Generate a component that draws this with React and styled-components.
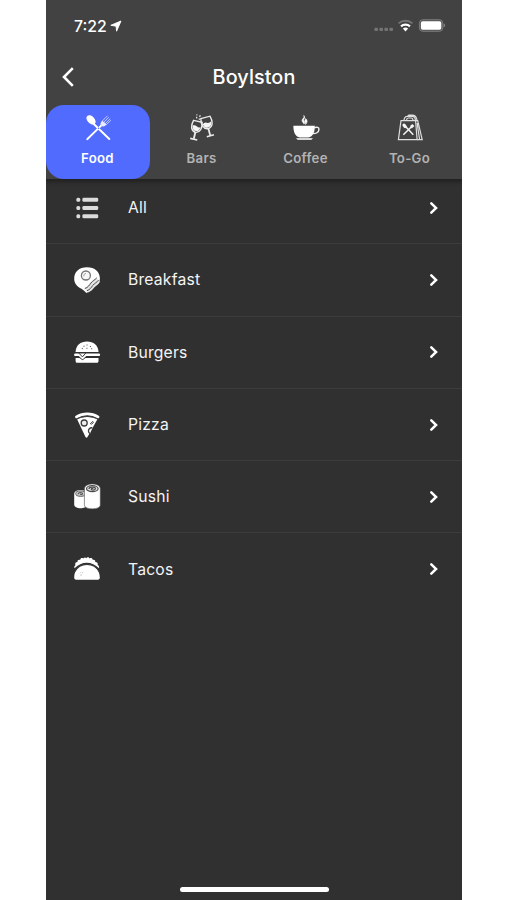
import React, { useState } from "react";
import styled, { createGlobalStyle } from "styled-components";

const tabs = [
  { name: "Food", icon: <FoodIcon /> },
  { name: "Bars", icon: <BarsIcon /> },
  { name: "Coffee", icon: <CoffeeIcon /> },
  { name: "To-Go", icon: <ToGoIcon /> },
];

const categories = [
  { name: "All", icon: <AllIcon /> },
  { name: "Breakfast", icon: <BreakfastIcon /> },
  { name: "Burgers", icon: <BurgerIcon /> },
  { name: "Pizza", icon: <PizzaIcon /> },
  { name: "Sushi", icon: <SushiIcon /> },
  { name: "Tacos", icon: <TacoIcon /> },
];

function App() {
  const [current, setCurrent] = useState("Food");

  return (
    <Page>
      <GlobalStyle />
      <Phone>
        <Header>
          <StatusBar>
            <Time>
              7:22
              <LocationIcon />
            </Time>
            <StatusIcons />
          </StatusBar>
          <NavBar>
            <BackButton aria-label="Back">
              <svg width="14" height="22" viewBox="0 0 14 22" fill="none">
                <path d="M11.8 2.1 3 11l8.8 8.900" stroke="#fff" strokeWidth="2.6" />
              </svg>
            </BackButton>
            <Title>Boylston</Title>
          </NavBar>
          <TabBar>
            {tabs.map((tab) => (
              <Tab
                key={tab.name}
                $active={tab.name === current}
                onClick={() => setCurrent(tab.name)}
              >
                {tab.icon}
                <TabLabel>{tab.name}</TabLabel>
              </Tab>
            ))}
          </TabBar>
        </Header>
        <List>
          {categories.map((category) => (
            <Row key={category.name}>
              <RowIcon>{category.icon}</RowIcon>
              <RowLabel>{category.name}</RowLabel>
              <Chevron />
            </Row>
          ))}
        </List>
        <HomeIndicator />
      </Phone>
    </Page>
  );
}

export default App;

function LocationIcon() {
  return (
    <svg width="12" height="12" viewBox="0 0 12 12">
      <path d="M11 1 .8 5.300l5.300.9.500 5z" fill="#fff" stroke="#fff" strokeWidth=".9" strokeLinejoin="round" />
    </svg>
  );
}

function StatusIcons() {
  return (
    <svg width="72" height="16" viewBox="0 0 72 16">
      <g fill="#747474">
        <rect x=".4" y="10.800" width="3.600" height="3.200" rx="1" />
        <rect x="5.400" y="10.800" width="3.600" height="3.200" rx="1" />
        <rect x="10.400" y="10.800" width="3.600" height="3.200" rx="1" />
        <rect x="15.400" y="10.800" width="3.600" height="3.200" rx="1" />
      </g>
      <path d="M24.600 6.400a10 10 0 0 1 13.800 0" stroke="#747474" strokeWidth="2" fill="none" />
      <path d="M27 9.400a6.600 6.600 0 0 1 9 0" stroke="#fff" strokeWidth="2.200" fill="none" />
      <path d="M28.900 11.600a3.800 3.800 0 0 1 5.200 0l-2.600 2.900z" fill="#fff" />
      <rect x="45.400" y="2.700" width="23.400" height="11.600" rx="3.400" fill="#565656" stroke="#7b7b7b" />
      <rect x="46.900" y="4.200" width="20.400" height="8.600" rx="1.800" fill="#fff" />
      <path d="M69.700 6.600c1.900.5 1.900 3.300 0 3.800z" fill="#858585" />
    </svg>
  );
}

function FoodIcon() {
  return (
    <svg width="28" height="28" viewBox="0 0 28 28">
      <path d="M9.500 9.800 25.300 25" stroke="#fff" strokeWidth="2" strokeLinecap="round" />
      <path d="M3.200 25.200 18.400 10.400" stroke="#fff" strokeWidth="1.900" strokeLinecap="round" />
      <ellipse cx="7" cy="5.900" rx="3.600" ry="5.500" transform="rotate(-43 7 5.900)" fill="#fff" />
      <path d="M16.700 11.700c-.6-2.500.1-3.500 1.600-5l2.200 1.900 2 2c-1.800 1.900-3.200 2.500-5.800 1.100z" fill="#e8ebff" />
      <path
        d="M18.400 6.900 23.300 2M19.900 8.200l4.600-4.700M21.300 9.600l4.600-4.500M22.400 10.500l4.200-3.900"
        stroke="#cdd5ff"
        strokeWidth=".9"
        strokeLinecap="round"
      />
      <circle cx="14.600" cy="14.200" r=".8" fill="#5069fb" />
    </svg>
  );
}

function BarsIcon() {
  return (
    <svg width="28" height="28" viewBox="0 0 28 28" fill="none" stroke="#ececec" strokeWidth="1.400">
      <g transform="translate(8.400 13.600) rotate(13)">
        <path d="M-4.400-6.400H4.400C6-1 4.900 4.400 0 4.800-4.900 4.400-6-1-4.400-6.400z" />
        <path d="M-4-1.400Q-1.800-2.600 0-1.400T4-1.200C3.600 2.400 2.400 3.500 0 3.600-2.400 3.500-3.600 2.400-4-1.400z" fill="#f4f4f4" stroke="none" />
        <path d="M0 4.500v7" strokeWidth="1.800" />
        <path d="M-3.600 11.900h7.200" strokeWidth="1.600" />
      </g>
      <g transform="translate(19 9.400) rotate(-15)">
        <path d="M-4.700-6.200H4.700C6.300-1 5.200 5 0 5.400-5.200 5-6.300-1-4.700-6.200z" />
        <path d="M-4.300-.4Q-2-2 0-.7T4.300-.8C3.900 3.100 2.500 4.200 0 4.300-2.500 4.200-3.900 3.100-4.300-.4z" fill="#f4f4f4" stroke="none" />
        <path d="M0 5v7.400" strokeWidth="1.800" />
        <path d="M-3.600 12.800h7.400" strokeWidth="1.600" />
      </g>
      <path d="M8.700 2.800v1.600M12.300 1.300l-.7 1.700M11 4.500l.6 1.300M8.400.9h1" strokeWidth="1.200" />
    </svg>
  );
}

function CoffeeIcon() {
  return (
    <svg width="28" height="28" viewBox="0 0 28 28">
      <path d="M1.400 11.800h21.400c.2 6.200-1.900 11-6.400 11.800H7.800C3.300 22.800 1.200 18 1.400 11.800z" fill="#fff" />
      <path d="M22 13.700c3.200-1.200 5.100-.4 4.900 1.900-.2 2.700-3 4.200-6.200 4" fill="none" stroke="#eee" strokeWidth="1.500" />
      <path d="M4 24h17l-1.700 2H5.700z" fill="#d6d6d6" />
      <path
        d="M11.800 1.500c1.600 1.800-1.900 3.300-1.700 5.200.1 1.500 1.700 1.800 1.900 3.400 1.100-1.400.3-2.500-.2-3.400-.8-1.500 2-2.800 0-5.200zM13.600 4.600c2 1.800 1.900 3.700 0 5.800.4-1.600-.9-2.400-.7-3.600.1-.7.8-1.200.7-2.200z"
        fill="#fff"
        stroke="#fff"
        strokeWidth=".7"
      />
    </svg>
  );
}

function ToGoIcon() {
  return (
    <svg width="28" height="28" viewBox="0 0 28 28" fill="none" stroke="#dedede" strokeWidth="1.200">
      <path d="M5 6.600h14.600l1.500 19H2.400z" />
      <path d="M19.600 6.600h2.100l4.500 19h-5.100M21.100 8.800l2.500 16.800" />
      <path d="M8 6.400c.3-3 1.400-4 3.300-4h4.900c1.900 0 3 1.100 3.300 4M10.400 6.400c.3-1.900 1-2.400 1.900-2.400h2.900c1.100 0 1.700.6 1.900 2.400M11.500 2.200l1.300-1h4.100c2.300.2 3.600 1.900 4.200 5.300" />
      <path d="m9.300 12.200 8 8.600M7.300 20.700l8.200-8" stroke="#f4f4f4" strokeWidth="1.500" />
      <ellipse cx="8.600" cy="11.900" rx="1.700" ry="2.600" transform="rotate(-43 8.600 11.900)" fill="#f4f4f4" stroke="none" />
      <path d="m14 12.100 2.400-2.200 2 2-2.600 2.600z" fill="#f4f4f4" stroke="none" />
    </svg>
  );
}

function AllIcon() {
  return (
    <svg width="28" height="28" viewBox="0 0 28 28" fill="#dcdcdc">
      {[3.7, 12, 20.3].map((y) => (
        <g key={y}>
          <rect x="3.400" y={y} width="3.800" height="4" rx="1.500" />
          <rect x="9.400" y={y} width="15.800" height="4" rx="1.300" />
        </g>
      ))}
    </svg>
  );
}

function BreakfastIcon() {
  return (
    <svg width="28" height="28" viewBox="0 0 28 28">
      <path
        d="M14 1.200c8 0 12.900 4.600 12.900 11.300 0 2.300-.9 4.300-2.300 6L13.800 27c-1.800-.8-2.800-2.800-5.300-4.200C4.200 20.700 1.200 17.600 1.200 12.800 1.200 5.800 6 1.200 14 1.200z"
        fill="#fff"
      />
      <circle cx="12.900" cy="9.500" r="4.500" fill="#f7f7f7" stroke="#747474" strokeWidth="1.300" />
      <path d="M10.900 10.300c-.5-1.700.7-2.800 2.100-2.900" stroke="#999" strokeWidth=".9" fill="none" />
      <path d="M11.200 22c3.300-1 4.200-3.100 5.800-5.200 1.800-2.400 4.100-3.100 6.100-5.200l3.900 4.100c-1.400 2.900-4 3.300-5.600 5.600-1.800 2.500-3.700 4.200-6.200 5.100z" fill="#e4e4e4" />
      <path
        d="M11.800 22.500c3.400-1 4.400-3.200 6.100-5.400 1.900-2.400 4-3.200 5.900-5.300M13.800 24.800c3.400-1.200 4.400-3.300 6.100-5.500 1.700-2.200 4-2.700 5.700-5.200"
        stroke="#4f4f4f"
        strokeWidth="1"
        fill="none"
      />
    </svg>
  );
}

function BurgerIcon() {
  return (
    <svg width="28" height="28" viewBox="0 0 28 28" fill="#fff">
      <path d="M2.600 14C2.600 7.400 7.600 3.400 14 3.400S25.500 7.400 25.500 14z" />
      <path d="M2.400 15.500h23.400c1 0 1.300.7 1.300 1.300s-.5 1.300-1.300 1.300H13.200l-3.600 3.400-3.900-3.400H2.400c-.9 0-1.300-.6-1.300-1.300s.4-1.300 1.300-1.300z" />
      <path d="m6 15.200 3.400 3.700 3.400-3.700" fill="none" stroke="#303030" strokeWidth="1" />
      <path d="M2.600 19.900h4l2.900 2.400 2.900-2.400h13.100v3c0 1.200-.8 1.900-1.900 1.900H4.500c-1.200 0-1.900-.7-1.900-1.900z" />
      <path d="m10.500 8.500 1-.6M13.500 7h1.100M17 8.200l1 .6M8.800 10.800l1-.5M13.300 10.300h1.200M18.200 10.500l1 .5" stroke="#666" strokeWidth="1.100" />
    </svg>
  );
}

function PizzaIcon() {
  return (
    <svg width="28" height="28" viewBox="0 0 28 28">
      <path d="M4.100 8.300c6.300-3 14-3 20.300 0L14.500 26c-.6 1-1.400 1-2 0z" fill="#fff" />
      <path d="M3.500 5.900C10 1.900 18.600 1.900 25 5.900" stroke="#fff" strokeWidth="2.800" strokeLinecap="round" fill="none" />
      <path d="M3.800 8.200C10.200 4.400 18.200 4.400 24.700 8.200" stroke="#454545" strokeWidth=".9" fill="none" />
      <circle cx="11.200" cy="12" r="3" fill="#eee" stroke="#3d3d3d" strokeWidth="1.300" />
      <path d="M19.400 16.800c-2.700-.3-4.300 1.700-3.900 3.700.1 1 .7 1.500 1.600 1.900" fill="#eee" stroke="#3d3d3d" strokeWidth="1.300" />
      <path d="m17.200 13 2.900-2.900M18.200 13.600l2.500-2.500" stroke="#3d3d3d" strokeWidth="1" />
    </svg>
  );
}

function SushiIcon() {
  return (
    <svg width="28" height="28" viewBox="0 0 28 28" fill="#fff">
      <path d="M1.200 10.800C1.200 5.600 14 5.600 14 10.800v11c0 4.600-12.800 4.600-12.800 0z" />
      <ellipse cx="7.700" cy="10.600" rx="5" ry="2.700" fill="#ccc" stroke="#5d5d5d" strokeWidth="1" />
      <path d="M5.200 11.200c0-2.300 4.800-2 4.300-.4-.4 1-2.400.9-2.100-.2" fill="none" stroke="#555" strokeWidth="1.100" />
      <path d="M11.400 5.700c0-6.300 15.900-6.300 15.900 0v16.500c0 4.900-15.900 4.900-15.900 0z" stroke="#484848" strokeWidth=".6" />
      <ellipse cx="19.300" cy="5.700" rx="5.800" ry="3" fill="#d8d8d8" stroke="#4a4a4a" strokeWidth="1.200" />
      <path d="M15.900 5.900c.2-2.500 7.200-2.400 6.500-.1-.6 1.800-4.600 1.600-4 0 .2-.6 1.500-.7 1.900-.1" fill="none" stroke="#4c4c4c" strokeWidth="1.200" />
    </svg>
  );
}

function TacoIcon() {
  return (
    <svg width="28" height="28" viewBox="0 0 28 28">
      <path
        d="M1.500 13.300c-.6-1.700.2-2.500.9-3-.7-2 .4-3.200 2.100-3.200-.2-1.900 1-2.700 2.700-2.300.2-1.900 1.800-2.300 3.100-1.400.9-1.300 2.300-1.200 2.900-.2.900-1.500 2.900-1.300 3.300.2 1.300-.9 3-.5 3.200 1.400 1.700-.3 2.800.6 2.600 2.300 1.800 0 2.900 1.100 2.400 2.900 1.200.7 1.700 1.700 1.300 3.300-6.900-7.500-17.600-7.500-24.500 0z"
        fill="#fff"
      />
      <path d="M1.200 22.600C1.200 14.400 7 9.300 14 9.300s12.800 5.100 12.800 13.300c0 1.400-.7 2.100-1.900 2.100H3.100c-1.200 0-1.900-.7-1.900-2.100z" fill="#fff" />
      <path d="M1.400 17C7 6.800 21 6.800 26.600 17" fill="none" stroke="#3a3a3a" strokeWidth="1.500" />
      <path d="M7 18.200l.8-.8M9 17.200l.8.600M7.400 20.200l1.500-.3" stroke="#aaa" strokeWidth=".8" />
    </svg>
  );
}

function Chevron() {
  return (
    <svg width="10" height="14" viewBox="0 0 10 14" fill="none">
      <path d="m2.300 2.300 4.800 4.700-4.800 4.700" stroke="#fff" strokeWidth="2.500" strokeLinecap="round" strokeLinejoin="miter" />
    </svg>
  );
}

const GlobalStyle = createGlobalStyle`
  * {
    box-sizing: border-box;
  }
  body {
    margin: 0;
    background: #fff;
    font-family: Inter, "Liberation Sans", sans-serif;
  }
`;

const Page = styled.div`
  height: 900px;
  display: flex;
  padding-left: 46px;
`;

const Phone = styled.div`
  width: 416px;
  height: 900px;
  display: flex;
  flex-direction: column;
  background: #303030;
  overflow: hidden;
`;

const Header = styled.header`
  position: relative;
  z-index: 1;
  height: 179px;
  flex-shrink: 0;
  background: #424242;
  box-shadow: 0 2px 4px 1px rgba(0, 0, 0, 0.32);
`;

const StatusBar = styled.div`
  height: 50px;
  display: flex;
  align-items: center;
  justify-content: space-between;
  padding: 0 16px 0 28px;
`;

const Time = styled.div`
  display: flex;
  align-items: center;
  gap: 3px;
  padding-top: 2px;
  color: #fff;
  font-size: 15.8px;
  font-weight: 500;
`;

const NavBar = styled.div`
  height: 55px;
  display: grid;
  grid-template-columns: 46px 1fr 46px;
  align-items: center;
  padding-bottom: 2px;
`;

const BackButton = styled.button`
  display: flex;
  padding: 0 0 0 15px;
  border: 0;
  background: none;
  cursor: pointer;
`;

const Title = styled.h1`
  margin: 0;
  color: #fff;
  font-size: 19.8px;
  font-weight: 500;
  letter-spacing: 0.1px;
  text-align: center;
`;

const TabBar = styled.nav`
  height: 74px;
  display: grid;
  grid-template-columns: repeat(4, 1fr);
`;

const Tab = styled.button`
  display: flex;
  flex-direction: column;
  align-items: center;
  gap: 7px;
  padding: 9px 1px 0 0;
  border: 0;
  border-radius: 18px;
  background: ${(props) => (props.$active ? "#506bfd" : "transparent")};
  color: ${(props) => (props.$active ? "#fff" : "#b3b3b3")};
  font-family: inherit;
  cursor: pointer;
`;

const TabLabel = styled.span`
  font-size: 13.2px;
  font-weight: 600;
  line-height: 19px;
  letter-spacing: 0.3px;
`;

const List = styled.div`
  flex: 1;
  margin-top: -7px;
`;

const Row = styled.div`
  height: 72.3px;
  display: flex;
  align-items: center;
  padding: 0 23px 0 27px;
  border-bottom: 1px solid #3b3b3b;
  &:last-child {
    border-bottom-color: transparent;
  }
`;

const RowIcon = styled.div`
  width: 28px;
  height: 28px;
  margin-right: 27px;
`;

const RowLabel = styled.span`
  flex: 1;
  color: #f4f4f4;
  font-size: 15.7px;
  letter-spacing: 0.2px;
`;

const HomeIndicator = styled.div`
  width: 149px;
  height: 5px;
  margin: 0 auto 8px;
  border-radius: 3px;
  background: #fff;
`;
